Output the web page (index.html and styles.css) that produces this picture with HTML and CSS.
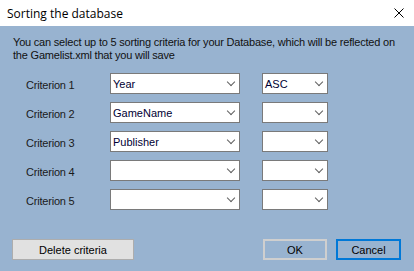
FILE: index.html
```html
<!DOCTYPE html>
<html lang="en">
<head>
  <meta charset="UTF-8">
  <title>Sorting the database</title>
  <link rel="stylesheet" href="styles.css">
</head>
<body>
  <div class="window">
    <div class="titlebar">
      <span class="title">Sorting the database</span>
      <svg class="close" width="10" height="10" viewBox="0 0 10 10">
        <path d="M0.5 0.5 L9.5 9.5 M9.5 0.5 L0.5 9.5" stroke="#000" stroke-width="1" fill="none"/>
      </svg>
    </div>

    <div class="panel">
      <p class="intro">You can select up to 5 sorting criteria for your Database, which will be reflected on<br>the Gamelist.xml that you will save</p>

      <div class="criteria">
        <span class="label">Criterion 1</span>
        <div class="combo field"><span class="value">Year</span><span class="arrow"></span></div>
        <div class="combo order"><span class="value">ASC</span><span class="arrow"></span></div>

        <span class="label">Criterion 2</span>
        <div class="combo field"><span class="value">GameName</span><span class="arrow"></span></div>
        <div class="combo order"><span class="value"></span><span class="arrow"></span></div>

        <span class="label">Criterion 3</span>
        <div class="combo field"><span class="value">Publisher</span><span class="arrow"></span></div>
        <div class="combo order"><span class="value"></span><span class="arrow"></span></div>

        <span class="label">Criterion 4</span>
        <div class="combo field"><span class="value"></span><span class="arrow"></span></div>
        <div class="combo order"><span class="value"></span><span class="arrow"></span></div>

        <span class="label">Criterion 5</span>
        <div class="combo field"><span class="value"></span><span class="arrow"></span></div>
        <div class="combo order"><span class="value"></span><span class="arrow"></span></div>
      </div>

      <div class="actions">
        <button class="btn delete">Delete criteria</button>
        <div class="right">
          <button class="btn ok">OK</button>
          <button class="btn cancel">Cancel</button>
        </div>
      </div>
    </div>
  </div>
</body>
</html>
```

FILE: styles.css
```css
body {
  margin: 0;
  padding: 0;
  font-family: "Liberation Sans", Arial, sans-serif;
  font-size: 11px;
}

.window {
  width: 414px;
  height: 271px;
  display: flex;
  flex-direction: column;
  background-color: #98b3d0;
}

.titlebar {
  height: 26px;
  background-color: #fff;
  display: flex;
  align-items: center;
  justify-content: space-between;
  padding: 0 10px 0 7px;
}

.title {
  font-family: "Open Sans", "Noto Sans", sans-serif;
  font-size: 12px;
  color: #000;
}

.panel {
  flex: 1;
  padding: 10px 13px 0 13px;
  color: #111;
}

.intro {
  margin: 0;
  line-height: 13px;
  white-space: nowrap;
  letter-spacing: -0.2px;
}

.criteria {
  margin-top: 11px;
  display: grid;
  grid-template-columns: 62px 130px 66px;
  grid-auto-rows: 21px;
  column-gap: 22px;
  row-gap: 8px;
  padding-left: 13px;
}

.label {
  padding-top: 6px;
  color: #1a1a1a;
  white-space: nowrap;
  letter-spacing: -0.2px;
}

.combo {
  background: #fff;
  border: 1px solid #7a7a7a;
  display: flex;
  align-items: center;
  justify-content: space-between;
  padding: 0 5px 0 2px;
  box-sizing: border-box;
}

.value {
  color: #000033;
}

.arrow {
  width: 5px;
  height: 5px;
  border-right: 1px solid #606060;
  border-bottom: 1px solid #606060;
  transform: rotate(45deg);
  margin-top: -3px;
}

.actions {
  margin-top: 29px;
  display: flex;
  justify-content: space-between;
}

.right {
  display: flex;
  gap: 9px;
}

.btn {
  font-family: "Liberation Sans", Arial, sans-serif;
  font-size: 11px;
  height: 21px;
  padding: 0;
  color: #000;
}

.delete {
  width: 122px;
  margin-left: -1px;
  background: #e1e1e1;
  border: 1px solid #adadad;
}

.ok {
  width: 64px;
  background: #98b3d0;
  border: 2px solid #cfcfcf;
}

.cancel {
  width: 65px;
  background: #98b3d0;
  border: 2px solid #0078d7;
}
```
